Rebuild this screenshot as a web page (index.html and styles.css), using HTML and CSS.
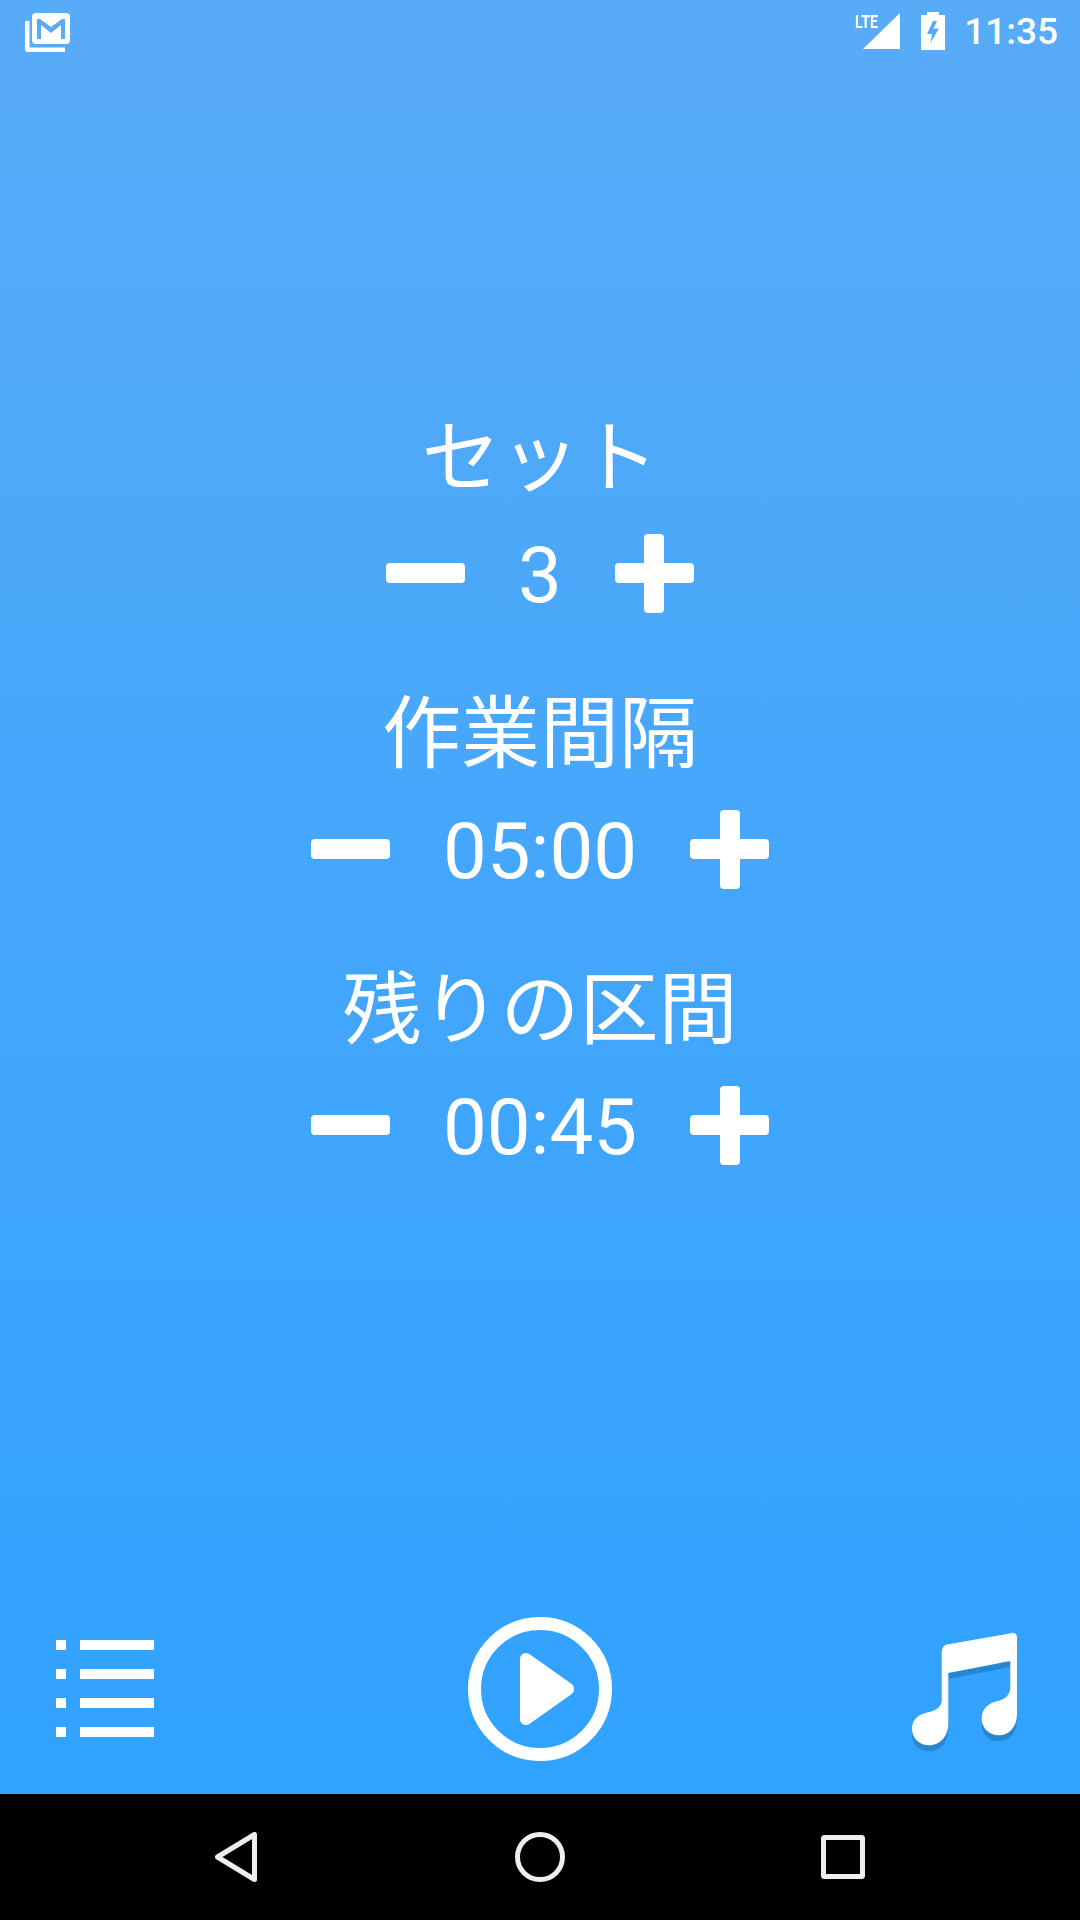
FILE: index.html
```html
<!DOCTYPE html>
<html lang="ja">
<head>
<meta charset="utf-8">
<title>タイマー</title>
<link rel="stylesheet" href="styles.css">
</head>
<body>
<div class="screen">
  <div class="app">
    <header class="status">
      <svg class="gmail" width="40" height="40" viewBox="0 0 40 40">
        <path class="glyph" d="M1 9h4.500v26.500H41V40H4a3 3 0 0 1-3-3z"/>
        <path class="glyph" fill-rule="evenodd" d="M12 1h30a4 4 0 0 1 4 4v23a4 4 0 0 1-4 4H12a4 4 0 0 1-4-4V5a4 4 0 0 1 4-4zM13 7v20h4V13l10 8 10-8v14h4V7h-3L27 15 16 7z"/>
      </svg>
      <div class="status-right">
        <span class="lte">LTE</span>
        <svg class="signal" width="38" height="38" viewBox="0 0 38 38">
          <path class="glyph" d="M37 1v36H0z"/>
        </svg>
        <svg class="battery" width="24" height="38" viewBox="0 0 24 38">
          <path class="glyph" fill-rule="evenodd" d="M6 0h12v3h6v35H0V3h6zM12 9L6 22h5L9.500 31 18 16.500h-5.500L16 9z"/>
        </svg>
        <span class="clock">11:35</span>
      </div>
    </header>

    <main class="settings">
      <section class="group">
        <h2 class="label">セット</h2>
        <div class="stepper">
          <span class="minus"></span>
          <span class="value">3</span>
          <span class="plus"></span>
        </div>
      </section>
      <section class="group">
        <h2 class="label">作業間隔</h2>
        <div class="stepper">
          <span class="minus"></span>
          <span class="value">05:00</span>
          <span class="plus"></span>
        </div>
      </section>
      <section class="group">
        <h2 class="label">残りの区間</h2>
        <div class="stepper">
          <span class="minus"></span>
          <span class="value">00:45</span>
          <span class="plus"></span>
        </div>
      </section>
    </main>

    <footer class="toolbar">
      <svg class="list" width="98" height="98" viewBox="0 0 98 98">
        <path class="glyph" d="M0 0h10v10H0zM24 0h74v10H24zM0 29h10v10H0zM24 29h74v10H24zM0 58h10v10H0zM24 58h74v10H24zM0 87h10v10H0zM24 87h74v10H24z"/>
      </svg>
      <svg class="play" width="144" height="144" viewBox="0 0 144 144">
        <circle class="ring" cx="72" cy="72" r="65.500"/>
        <path class="glyph" d="M52 42a6 6 0 0 1 10-4.500l41 29a6.500 6.500 0 0 1 0 11l-41 29A6 6 0 0 1 52 102z"/>
      </svg>
      <svg class="music" width="106" height="120" viewBox="0 0 106 120">
        <path class="note-shadow" transform="translate(0 6)" d="M35 11.500 100.500 0Q105-.5 105 5V81C105 94 97 102.300 87 102.300 77 102.300 69.700 95 69.700 85.700 69.700 76 76 70 85.700 68 93 66.500 98.300 62 98.300 54V28L36.300 40V91C36.300 103 28 112.300 17.300 112.300 7 112.300 0 105 0 95.700 0 86 7 81 17.300 79 25 77.500 29.700 73 29.700 67.300V20.700C29.700 16 31 12.500 35 11.500z"/>
        <path class="glyph" d="M35 11.500 100.500 0Q105-.5 105 5V81C105 94 97 102.300 87 102.300 77 102.300 69.700 95 69.700 85.700 69.700 76 76 70 85.700 68 93 66.500 98.300 62 98.300 54V28L36.300 40V91C36.300 103 28 112.300 17.300 112.300 7 112.300 0 105 0 95.700 0 86 7 81 17.300 79 25 77.500 29.700 73 29.700 67.300V20.700C29.700 16 31 12.500 35 11.500z"/>
      </svg>
    </footer>
  </div>

  <nav class="navbar">
    <svg class="nav-back" width="42" height="50" viewBox="0 0 42 50">
      <path class="nav-stroke" d="M39.500 2.500v45L2.500 25z"/>
    </svg>
    <svg width="50" height="50" viewBox="0 0 50 50">
      <circle class="nav-stroke" cx="25" cy="25" r="22.500"/>
    </svg>
    <svg class="nav-recent" width="44" height="44" viewBox="0 0 44 44">
      <rect class="nav-stroke" x="2.500" y="2.500" width="39" height="39" rx="1"/>
    </svg>
  </nav>
</div>
</body>
</html>
```
FILE: styles.css
```css
* { box-sizing: border-box; }
html, body { margin: 0; padding: 0; }
body { width: 1080px; height: 1920px; overflow: hidden; font-family: Roboto, "Noto Sans CJK JP", sans-serif; color: #fff; }

.screen { width: 1080px; height: 1920px; display: flex; flex-direction: column; }
.app { height: 1794px; display: flex; flex-direction: column; background: linear-gradient(180deg, #58abf7 0%, #30a2ff 100%); }

.glyph { fill: #fff; }

.status { height: 66px; padding: 12px 22px 0 24px; display: flex; justify-content: space-between; align-items: flex-start; }
.gmail { overflow: visible; }
.status-right { display: flex; align-items: flex-start; position: relative; }
.signal { margin-right: 20px; }
.lte { position: absolute; left: -8px; top: 0; font-size: 18px; line-height: 20px; font-weight: 700; transform: scaleX(.8); transform-origin: left top; }
.battery { margin-right: 19px; }
.clock { font-size: 37px; line-height: 40px; font-weight: 500; }

.settings { height: 1574px; padding-top: 328px; display: flex; flex-direction: column; align-items: center; gap: 40px; }
.group { display: flex; flex-direction: column; align-items: center; height: 236px; }
.label { margin: 0; font-family: "Noto Sans CJK JP", sans-serif; font-size: 79px; font-weight: 400; line-height: 116px; }
.stepper { margin-top: 7px; height: 112px; display: flex; align-items: center; gap: 53px; }
.value { font-size: 78px; line-height: 107px; padding-top: 5px; font-weight: 400; }

.minus, .plus { display: block; position: relative; width: 79px; height: 79px; flex: none; }
.minus::before, .plus::before { content: ""; position: absolute; left: 0; right: 0; top: 29.500px; height: 20px; background: #fff; border-radius: 4px; }
.plus::after { content: ""; position: absolute; top: 0; bottom: 0; left: 29.500px; width: 20px; background: #fff; border-radius: 4px; }

.toolbar { flex: 1; display: grid; grid-template-columns: 1fr auto 1fr; align-items: start; padding: 0 56px; }
.play { margin-top: -23px; }
.music { margin-top: -7px; margin-right: 6px; justify-self: end; }
.ring { fill: none; stroke: #fff; stroke-width: 13; }
.note-shadow { fill: #2786d4; filter: blur(.5px); }

.navbar { height: 126px; background: #000; display: grid; grid-template-columns: 1fr auto 1fr; align-items: center; padding: 0 215px; }
.nav-recent { justify-self: end; }
.nav-stroke { fill: none; stroke: #eee; stroke-width: 5; stroke-linejoin: round; }
```
